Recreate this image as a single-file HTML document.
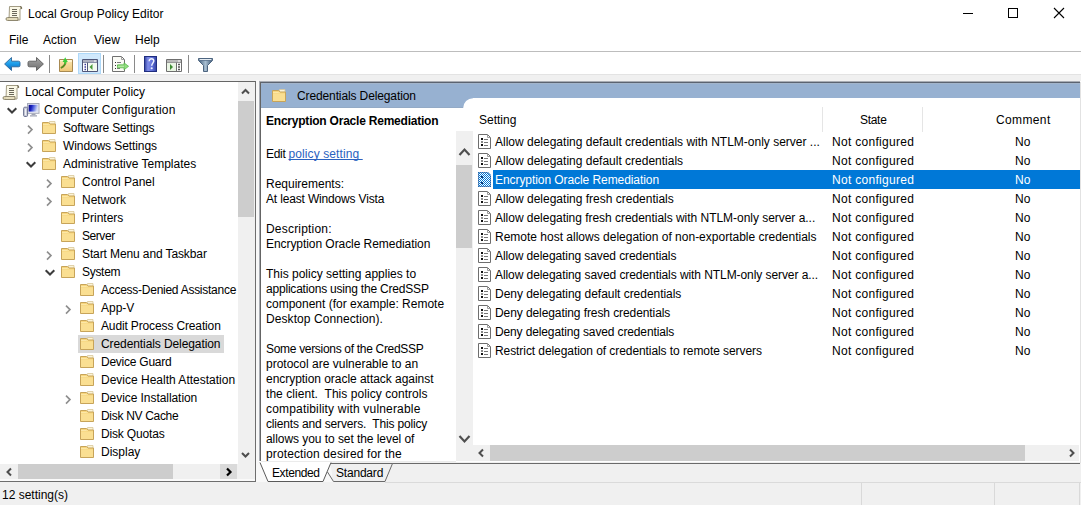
<!DOCTYPE html>
<html><head><meta charset="utf-8">
<style>
*{box-sizing:border-box}
html,body{margin:0;padding:0}
body{width:1081px;height:505px;overflow:hidden;position:relative;background:#f0f0f0;font-family:"Liberation Sans",sans-serif;font-size:12px;color:#000}
.a{position:absolute}
.t{position:absolute;line-height:14px;white-space:pre}
svg{position:absolute;overflow:visible}
</style></head><body>
<div class="a" style="left:0px;top:0px;width:1081px;height:74px;background:#fff;"></div>
<div class="a" style="left:0px;top:51px;width:1081px;height:1px;background:#bdbdbd;"></div>
<div class="a" style="left:0px;top:74px;width:1081px;height:1px;background:#e3e3e3;"></div>
<svg class="a" style="left:7px;top:6px" width="15" height="15" viewBox="0 0 15 15"><path d="M2.5 0.5h10.5l1.5 1.5-1.5 1v11h-11z" fill="#fbf8e6" stroke="#a39c84"/><path d="M13 0.6a1.4 1.4 0 0 1 1.3 2.2" fill="none" stroke="#777058" stroke-width="1.3"/><path d="M5 3.5h5M5 5.5h5M5 7.5h5M5 9.5h5" stroke="#6a675a" stroke-width="1"/><path d="M0.5 11.5h10.5v3h-10.5a1.5 1.5 0 0 1 0-3z" fill="#ddd3ae" stroke="#8f8870"/><path d="M2 13h8" stroke="#f4eed6" stroke-width="0.8"/></svg>
<div class="t" style="left:28px;top:7px;">Local Group Policy Editor</div>
<div class="t" style="left:9px;top:33px;">File</div>
<div class="t" style="left:43px;top:33px;">Action</div>
<div class="t" style="left:94px;top:33px;">View</div>
<div class="t" style="left:135px;top:33px;">Help</div>
<div class="a" style="left:963px;top:13px;width:10px;height:1px;background:#000;"></div>
<div class="a" style="left:1008px;top:8px;width:10px;height:10px;border:1px solid #000"></div>
<svg class="a" style="left:1053px;top:7px" width="12" height="12" viewBox="0 0 12 12"><path d="M1 1L11 11M11 1L1 11" stroke="#000" stroke-width="1.1"/></svg>
<svg class="a" style="left:4px;top:57px" width="17" height="15" viewBox="0 0 17 15"><defs><linearGradient id="bg1" x1="0" y1="0" x2="0" y2="1"><stop offset="0" stop-color="#4cc4fb"/><stop offset="0.5" stop-color="#1c9be8"/><stop offset="1" stop-color="#0b64b6"/></linearGradient></defs><path d="M0.6 7L7.5 0.5V4.2H14.5Q16 4.2 16 5.7V8.3Q16 9.8 14.5 9.8H7.5V13.5Z" fill="url(#bg1)" stroke="#2d6499" stroke-width="0.9" stroke-linejoin="round"/></svg>
<svg class="a" style="left:27px;top:57px" width="17" height="15" viewBox="0 0 17 15"><defs><linearGradient id="bg2" x1="0" y1="0" x2="0" y2="1"><stop offset="0" stop-color="#a8a8a8"/><stop offset="0.5" stop-color="#8a8a8a"/><stop offset="1" stop-color="#6e6e6e"/></linearGradient></defs><path d="M16.4 7L9.5 0.5V4.2H2.5Q1 4.2 1 5.7V8.3Q1 9.8 2.5 9.8H9.5V13.5Z" fill="url(#bg2)" stroke="#5a5a5a" stroke-width="0.9" stroke-linejoin="round"/></svg>
<div class="a" style="left:49px;top:55px;width:1px;height:18px;background:#8a8a8a;"></div>
<svg class="a" style="left:59px;top:56px" width="15" height="16" viewBox="0 0 15 16"><defs><linearGradient id="fu" x1="0" y1="0" x2="0" y2="1"><stop offset="0" stop-color="#f9e6b0"/><stop offset="1" stop-color="#eec677"/></linearGradient></defs><path d="M0.5 3.5h13v12h-13z" fill="url(#fu)" stroke="#a88a52"/><path d="M1 4.5h12M7 5.5h6" stroke="#fff3cf" stroke-width="1"/><path d="M6.5 5.5C6.5 9 5 10.5 1.8 12" fill="none" stroke="#5a8a22" stroke-width="1.9"/><path d="M3.6 6L6.2 1.2L8.8 6z" fill="#3ccd3a"/><path d="M5.5 5v3h1.6V5z" fill="#3ccd3a"/></svg>
<div class="a" style="left:78px;top:53px;width:23px;height:21px;background:#d0e8fc;border:1px solid #aed8f8"></div>
<svg class="a" style="left:82px;top:59px" width="16" height="13" viewBox="0 0 16 13"><path d="M0.5 0.5h15v12h-15z" fill="#fff" stroke="#4f5577"/><path d="M1 2h11M12.5 2h1M14 2h1" stroke="#5a6080" stroke-width="1"/><path d="M1 3.5h14" stroke="#8a90a8"/><path d="M5.5 3.5v9" stroke="#4f5577"/><path d="M2.5 5.5h1.5M2.5 8h1.5M2.5 10.5h1.5" stroke="#3a3a9a" stroke-width="1.3"/><rect x="6" y="4" width="9" height="8" fill="#f4faf0"/><path d="M10.5 5L7.5 8L10.5 11z" fill="#4a9a3a"/></svg>
<div class="a" style="left:103px;top:55px;width:1px;height:18px;background:#8a8a8a;"></div>
<svg class="a" style="left:112px;top:56px" width="17" height="16" viewBox="0 0 17 16"><path d="M0.5 0.5h9l3 3v12h-12z" fill="#fbfbf6" stroke="#707070"/><path d="M9.5 0.5v3h3" fill="none" stroke="#a0a0a0"/><path d="M3 6.5h1M3 9.5h1M3 12.5h1" stroke="#333" stroke-width="1.1"/><path d="M5 6.5h4M5 9.5h3M5 12.5h3" stroke="#7a7a7a" stroke-width="1"/><path d="M5.5 8.8h6.5V6.8l4.6 3.5L12 13.8v-2H5.5z" fill="#86dc72" fill-opacity="0.9" stroke="#52b443" stroke-width="0.7"/><path d="M6 10.3h6" stroke="#c8f0b8" stroke-width="0.8"/></svg>
<div class="a" style="left:134px;top:55px;width:1px;height:18px;background:#8a8a8a;"></div>
<svg class="a" style="left:144px;top:56px" width="13" height="16" viewBox="0 0 13 16"><defs><linearGradient id="hg" x1="0" x2="1"><stop offset="0" stop-color="#25358e"/><stop offset="0.3" stop-color="#7e8cea"/><stop offset="0.65" stop-color="#5f6fd8"/><stop offset="1" stop-color="#2c3c98"/></linearGradient></defs><rect x="0" y="0" width="13" height="16" fill="url(#hg)"/><rect x="0.5" y="0.5" width="12" height="15" fill="none" stroke="#1f2d80"/><path d="M5.2 5.2C5.2 3.4 6.3 2.8 7.5 2.8S9.8 3.6 9.8 5.1 7.8 7.4 7.7 9.8" fill="none" stroke="#eef2ff" stroke-width="1.5"/><circle cx="7.7" cy="12.3" r="1.05" fill="#eef2ff"/></svg>
<svg class="a" style="left:166px;top:59px" width="16" height="13" viewBox="0 0 16 13"><path d="M0.5 0.5h15v12h-15z" fill="#fff" stroke="#6e6e6e"/><path d="M1 2h11M12.5 2h1M14 2h1" stroke="#777" stroke-width="1"/><path d="M1 3.5h14" stroke="#999"/><path d="M10.5 3.5v9" stroke="#6e6e6e"/><path d="M12 5.5h2M12 8h2M12 10.5h2" stroke="#555" stroke-width="1.3"/><rect x="1" y="4" width="9" height="8" fill="#eaf5e4"/><path d="M4 5L7 8L4 11z" fill="#3c8c32"/></svg>
<div class="a" style="left:188px;top:55px;width:1px;height:18px;background:#8a8a8a;"></div>
<svg class="a" style="left:198px;top:58px" width="15" height="14" viewBox="0 0 15 14"><defs><linearGradient id="fg" x1="0" x2="1"><stop offset="0" stop-color="#3f5c7a"/><stop offset="0.5" stop-color="#a9bfd2"/><stop offset="1" stop-color="#3d5876"/></linearGradient></defs><path d="M0.5 0.5h14v2L9.5 7.5v6h-4v-6L0.5 2.5z" fill="url(#fg)" stroke="#4d6580" stroke-linejoin="round"/><path d="M1.5 1.5h12" stroke="#e6edf3" stroke-width="1"/><path d="M1 2.5h13" stroke="#5d7590" stroke-width="0.8"/></svg>
<div class="a" style="left:0;top:81px;width:256px;height:401px;background:#fff;border-top:1px solid #666;border-right:1px solid #6e6e6e;border-bottom:1px solid #6e6e6e"></div>
<div class="a" style="left:256px;top:80px;width:3px;height:402px;background:#f8f8f8;"></div>
<div class="a" style="left:78px;top:335px;width:146px;height:18px;background:#d9d9d9;"></div>
<div class="a" style="left:0;top:82px;width:238px;height:381px;overflow:hidden">
<svg class="a" style="left:4px;top:3px" width="15" height="15" viewBox="0 0 15 15"><path d="M2.5 0.5h10.5l1.5 1.5-1.5 1v11h-11z" fill="#fbf8e6" stroke="#a39c84"/><path d="M13 0.6a1.4 1.4 0 0 1 1.3 2.2" fill="none" stroke="#777058" stroke-width="1.3"/><path d="M5 3.5h5M5 5.5h5M5 7.5h5M5 9.5h5" stroke="#6a675a" stroke-width="1"/><path d="M0.5 11.5h10.5v3h-10.5a1.5 1.5 0 0 1 0-3z" fill="#ddd3ae" stroke="#8f8870"/><path d="M2 13h8" stroke="#f4eed6" stroke-width="0.8"/></svg>
<div class="t" style="left:25px;top:3px;">Local Computer Policy</div>
<svg class="a" style="left:7px;top:25px" width="10" height="7" viewBox="0 0 10 7"><path d="M0.7 1.2L5 5.5L9.3 1.2" fill="none" stroke="#3c3c3c" stroke-width="2"/></svg>
<svg class="a" style="left:23px;top:21px" width="17" height="14" viewBox="0 0 17 14"><defs><linearGradient id="cg" x1="0" y1="0" x2="1" y2="0.2"><stop offset="0" stop-color="#0c0c7a"/><stop offset="0.35" stop-color="#1c24c0"/><stop offset="0.6" stop-color="#5a6ae0"/><stop offset="1" stop-color="#d4dcf6"/></linearGradient></defs><rect x="4.5" y="0.5" width="11.5" height="9.8" fill="#eceef6" stroke="#a4a8b8"/><rect x="5.6" y="1.8" width="9.4" height="6.8" fill="url(#cg)"/><path d="M8.5 11.3h4M7 12.8h7" stroke="#a0a4b4" stroke-width="1.2"/><rect x="0.6" y="4.2" width="4" height="9.3" rx="1.2" fill="#c8ccd8" stroke="#6c7290"/><path d="M2.6 6v6" stroke="#f4f4fa" stroke-width="1"/></svg>
<div class="t" style="left:44px;top:21px;;letter-spacing:0.190px">Computer Configuration</div>
<svg class="a" style="left:27px;top:43px" width="7" height="10" viewBox="0 0 7 10"><path d="M1 0.6L5 4.6L1 8.6" fill="none" stroke="#8e8e8e" stroke-width="1.6"/></svg>
<svg class="a" style="left:42px;top:39px" width="14" height="13" viewBox="0 0 14 13"><path d="M7.5 0.5h5.5v3h-5.5z" fill="#fbf3d8" stroke="#d8c89a" stroke-width="0.8"/><path d="M0.5 1.5h6l1.5 1.5h5.5v9.5h-13z" fill="#f7d57c" stroke="#c7a45a"/><path d="M1 3.5h5.5l1.2-0.2" fill="none" stroke="#fbe7a8" stroke-width="1"/><rect x="1" y="4.5" width="12" height="7.5" fill="#fadf92"/></svg>
<div class="t" style="left:63px;top:39px;;letter-spacing:-0.162px">Software Settings</div>
<svg class="a" style="left:27px;top:61px" width="7" height="10" viewBox="0 0 7 10"><path d="M1 0.6L5 4.6L1 8.6" fill="none" stroke="#8e8e8e" stroke-width="1.6"/></svg>
<svg class="a" style="left:42px;top:57px" width="14" height="13" viewBox="0 0 14 13"><path d="M7.5 0.5h5.5v3h-5.5z" fill="#fbf3d8" stroke="#d8c89a" stroke-width="0.8"/><path d="M0.5 1.5h6l1.5 1.5h5.5v9.5h-13z" fill="#f7d57c" stroke="#c7a45a"/><path d="M1 3.5h5.5l1.2-0.2" fill="none" stroke="#fbe7a8" stroke-width="1"/><rect x="1" y="4.5" width="12" height="7.5" fill="#fadf92"/></svg>
<div class="t" style="left:63px;top:57px;;letter-spacing:-0.093px">Windows Settings</div>
<svg class="a" style="left:26px;top:79px" width="10" height="7" viewBox="0 0 10 7"><path d="M0.7 1.2L5 5.5L9.3 1.2" fill="none" stroke="#3c3c3c" stroke-width="2"/></svg>
<svg class="a" style="left:42px;top:75px" width="14" height="13" viewBox="0 0 14 13"><path d="M7.5 0.5h5.5v3h-5.5z" fill="#fbf3d8" stroke="#d8c89a" stroke-width="0.8"/><path d="M0.5 1.5h6l1.5 1.5h5.5v9.5h-13z" fill="#f7d57c" stroke="#c7a45a"/><path d="M1 3.5h5.5l1.2-0.2" fill="none" stroke="#fbe7a8" stroke-width="1"/><rect x="1" y="4.5" width="12" height="7.5" fill="#fadf92"/></svg>
<div class="t" style="left:63px;top:75px;">Administrative Templates</div>
<svg class="a" style="left:46px;top:97px" width="7" height="10" viewBox="0 0 7 10"><path d="M1 0.6L5 4.6L1 8.6" fill="none" stroke="#8e8e8e" stroke-width="1.6"/></svg>
<svg class="a" style="left:61px;top:93px" width="14" height="13" viewBox="0 0 14 13"><path d="M7.5 0.5h5.5v3h-5.5z" fill="#fbf3d8" stroke="#d8c89a" stroke-width="0.8"/><path d="M0.5 1.5h6l1.5 1.5h5.5v9.5h-13z" fill="#f7d57c" stroke="#c7a45a"/><path d="M1 3.5h5.5l1.2-0.2" fill="none" stroke="#fbe7a8" stroke-width="1"/><rect x="1" y="4.5" width="12" height="7.5" fill="#fadf92"/></svg>
<div class="t" style="left:82px;top:93px;">Control Panel</div>
<svg class="a" style="left:46px;top:115px" width="7" height="10" viewBox="0 0 7 10"><path d="M1 0.6L5 4.6L1 8.6" fill="none" stroke="#8e8e8e" stroke-width="1.6"/></svg>
<svg class="a" style="left:61px;top:111px" width="14" height="13" viewBox="0 0 14 13"><path d="M7.5 0.5h5.5v3h-5.5z" fill="#fbf3d8" stroke="#d8c89a" stroke-width="0.8"/><path d="M0.5 1.5h6l1.5 1.5h5.5v9.5h-13z" fill="#f7d57c" stroke="#c7a45a"/><path d="M1 3.5h5.5l1.2-0.2" fill="none" stroke="#fbe7a8" stroke-width="1"/><rect x="1" y="4.5" width="12" height="7.5" fill="#fadf92"/></svg>
<div class="t" style="left:82px;top:111px;">Network</div>
<svg class="a" style="left:61px;top:129px" width="14" height="13" viewBox="0 0 14 13"><path d="M7.5 0.5h5.5v3h-5.5z" fill="#fbf3d8" stroke="#d8c89a" stroke-width="0.8"/><path d="M0.5 1.5h6l1.5 1.5h5.5v9.5h-13z" fill="#f7d57c" stroke="#c7a45a"/><path d="M1 3.5h5.5l1.2-0.2" fill="none" stroke="#fbe7a8" stroke-width="1"/><rect x="1" y="4.5" width="12" height="7.5" fill="#fadf92"/></svg>
<div class="t" style="left:82px;top:129px;">Printers</div>
<svg class="a" style="left:61px;top:147px" width="14" height="13" viewBox="0 0 14 13"><path d="M7.5 0.5h5.5v3h-5.5z" fill="#fbf3d8" stroke="#d8c89a" stroke-width="0.8"/><path d="M0.5 1.5h6l1.5 1.5h5.5v9.5h-13z" fill="#f7d57c" stroke="#c7a45a"/><path d="M1 3.5h5.5l1.2-0.2" fill="none" stroke="#fbe7a8" stroke-width="1"/><rect x="1" y="4.5" width="12" height="7.5" fill="#fadf92"/></svg>
<div class="t" style="left:82px;top:147px;;letter-spacing:-0.440px">Server</div>
<svg class="a" style="left:46px;top:169px" width="7" height="10" viewBox="0 0 7 10"><path d="M1 0.6L5 4.6L1 8.6" fill="none" stroke="#8e8e8e" stroke-width="1.6"/></svg>
<svg class="a" style="left:61px;top:165px" width="14" height="13" viewBox="0 0 14 13"><path d="M7.5 0.5h5.5v3h-5.5z" fill="#fbf3d8" stroke="#d8c89a" stroke-width="0.8"/><path d="M0.5 1.5h6l1.5 1.5h5.5v9.5h-13z" fill="#f7d57c" stroke="#c7a45a"/><path d="M1 3.5h5.5l1.2-0.2" fill="none" stroke="#fbe7a8" stroke-width="1"/><rect x="1" y="4.5" width="12" height="7.5" fill="#fadf92"/></svg>
<div class="t" style="left:82px;top:165px;;letter-spacing:-0.110px">Start Menu and Taskbar</div>
<svg class="a" style="left:45px;top:187px" width="10" height="7" viewBox="0 0 10 7"><path d="M0.7 1.2L5 5.5L9.3 1.2" fill="none" stroke="#3c3c3c" stroke-width="2"/></svg>
<svg class="a" style="left:61px;top:183px" width="14" height="13" viewBox="0 0 14 13"><path d="M7.5 0.5h5.5v3h-5.5z" fill="#fbf3d8" stroke="#d8c89a" stroke-width="0.8"/><path d="M0.5 1.5h6l1.5 1.5h5.5v9.5h-13z" fill="#f7d57c" stroke="#c7a45a"/><path d="M1 3.5h5.5l1.2-0.2" fill="none" stroke="#fbe7a8" stroke-width="1"/><rect x="1" y="4.5" width="12" height="7.5" fill="#fadf92"/></svg>
<div class="t" style="left:82px;top:183px;;letter-spacing:-0.300px">System</div>
<svg class="a" style="left:80px;top:201px" width="14" height="13" viewBox="0 0 14 13"><path d="M7.5 0.5h5.5v3h-5.5z" fill="#fbf3d8" stroke="#d8c89a" stroke-width="0.8"/><path d="M0.5 1.5h6l1.5 1.5h5.5v9.5h-13z" fill="#f7d57c" stroke="#c7a45a"/><path d="M1 3.5h5.5l1.2-0.2" fill="none" stroke="#fbe7a8" stroke-width="1"/><rect x="1" y="4.5" width="12" height="7.5" fill="#fadf92"/></svg>
<div class="t" style="left:101px;top:201px;;letter-spacing:-0.265px">Access-Denied Assistance</div>
<svg class="a" style="left:65px;top:223px" width="7" height="10" viewBox="0 0 7 10"><path d="M1 0.6L5 4.6L1 8.6" fill="none" stroke="#8e8e8e" stroke-width="1.6"/></svg>
<svg class="a" style="left:80px;top:219px" width="14" height="13" viewBox="0 0 14 13"><path d="M7.5 0.5h5.5v3h-5.5z" fill="#fbf3d8" stroke="#d8c89a" stroke-width="0.8"/><path d="M0.5 1.5h6l1.5 1.5h5.5v9.5h-13z" fill="#f7d57c" stroke="#c7a45a"/><path d="M1 3.5h5.5l1.2-0.2" fill="none" stroke="#fbe7a8" stroke-width="1"/><rect x="1" y="4.5" width="12" height="7.5" fill="#fadf92"/></svg>
<div class="t" style="left:101px;top:219px;">App-V</div>
<svg class="a" style="left:80px;top:237px" width="14" height="13" viewBox="0 0 14 13"><path d="M7.5 0.5h5.5v3h-5.5z" fill="#fbf3d8" stroke="#d8c89a" stroke-width="0.8"/><path d="M0.5 1.5h6l1.5 1.5h5.5v9.5h-13z" fill="#f7d57c" stroke="#c7a45a"/><path d="M1 3.5h5.5l1.2-0.2" fill="none" stroke="#fbe7a8" stroke-width="1"/><rect x="1" y="4.5" width="12" height="7.5" fill="#fadf92"/></svg>
<div class="t" style="left:101px;top:237px;;letter-spacing:-0.138px">Audit Process Creation</div>
<svg class="a" style="left:80px;top:255px" width="14" height="13" viewBox="0 0 14 13"><path d="M7.5 0.5h5.5v3h-5.5z" fill="#fbf3d8" stroke="#d8c89a" stroke-width="0.8"/><path d="M0.5 1.5h6l1.5 1.5h5.5v9.5h-13z" fill="#f7d57c" stroke="#c7a45a"/><path d="M1 3.5h5.5l1.2-0.2" fill="none" stroke="#fbe7a8" stroke-width="1"/><rect x="1" y="4.5" width="12" height="7.5" fill="#fadf92"/></svg>
<div class="t" style="left:101px;top:255px;;letter-spacing:-0.090px">Credentials Delegation</div>
<svg class="a" style="left:80px;top:273px" width="14" height="13" viewBox="0 0 14 13"><path d="M7.5 0.5h5.5v3h-5.5z" fill="#fbf3d8" stroke="#d8c89a" stroke-width="0.8"/><path d="M0.5 1.5h6l1.5 1.5h5.5v9.5h-13z" fill="#f7d57c" stroke="#c7a45a"/><path d="M1 3.5h5.5l1.2-0.2" fill="none" stroke="#fbe7a8" stroke-width="1"/><rect x="1" y="4.5" width="12" height="7.5" fill="#fadf92"/></svg>
<div class="t" style="left:101px;top:273px;;letter-spacing:-0.245px">Device Guard</div>
<svg class="a" style="left:80px;top:291px" width="14" height="13" viewBox="0 0 14 13"><path d="M7.5 0.5h5.5v3h-5.5z" fill="#fbf3d8" stroke="#d8c89a" stroke-width="0.8"/><path d="M0.5 1.5h6l1.5 1.5h5.5v9.5h-13z" fill="#f7d57c" stroke="#c7a45a"/><path d="M1 3.5h5.5l1.2-0.2" fill="none" stroke="#fbe7a8" stroke-width="1"/><rect x="1" y="4.5" width="12" height="7.5" fill="#fadf92"/></svg>
<div class="t" style="left:101px;top:291px;">Device Health Attestation</div>
<svg class="a" style="left:65px;top:313px" width="7" height="10" viewBox="0 0 7 10"><path d="M1 0.6L5 4.6L1 8.6" fill="none" stroke="#8e8e8e" stroke-width="1.6"/></svg>
<svg class="a" style="left:80px;top:309px" width="14" height="13" viewBox="0 0 14 13"><path d="M7.5 0.5h5.5v3h-5.5z" fill="#fbf3d8" stroke="#d8c89a" stroke-width="0.8"/><path d="M0.5 1.5h6l1.5 1.5h5.5v9.5h-13z" fill="#f7d57c" stroke="#c7a45a"/><path d="M1 3.5h5.5l1.2-0.2" fill="none" stroke="#fbe7a8" stroke-width="1"/><rect x="1" y="4.5" width="12" height="7.5" fill="#fadf92"/></svg>
<div class="t" style="left:101px;top:309px;;letter-spacing:-0.061px">Device Installation</div>
<svg class="a" style="left:80px;top:327px" width="14" height="13" viewBox="0 0 14 13"><path d="M7.5 0.5h5.5v3h-5.5z" fill="#fbf3d8" stroke="#d8c89a" stroke-width="0.8"/><path d="M0.5 1.5h6l1.5 1.5h5.5v9.5h-13z" fill="#f7d57c" stroke="#c7a45a"/><path d="M1 3.5h5.5l1.2-0.2" fill="none" stroke="#fbe7a8" stroke-width="1"/><rect x="1" y="4.5" width="12" height="7.5" fill="#fadf92"/></svg>
<div class="t" style="left:101px;top:327px;;letter-spacing:-0.308px">Disk NV Cache</div>
<svg class="a" style="left:80px;top:345px" width="14" height="13" viewBox="0 0 14 13"><path d="M7.5 0.5h5.5v3h-5.5z" fill="#fbf3d8" stroke="#d8c89a" stroke-width="0.8"/><path d="M0.5 1.5h6l1.5 1.5h5.5v9.5h-13z" fill="#f7d57c" stroke="#c7a45a"/><path d="M1 3.5h5.5l1.2-0.2" fill="none" stroke="#fbe7a8" stroke-width="1"/><rect x="1" y="4.5" width="12" height="7.5" fill="#fadf92"/></svg>
<div class="t" style="left:101px;top:345px;;letter-spacing:-0.170px">Disk Quotas</div>
<svg class="a" style="left:80px;top:363px" width="14" height="13" viewBox="0 0 14 13"><path d="M7.5 0.5h5.5v3h-5.5z" fill="#fbf3d8" stroke="#d8c89a" stroke-width="0.8"/><path d="M0.5 1.5h6l1.5 1.5h5.5v9.5h-13z" fill="#f7d57c" stroke="#c7a45a"/><path d="M1 3.5h5.5l1.2-0.2" fill="none" stroke="#fbe7a8" stroke-width="1"/><rect x="1" y="4.5" width="12" height="7.5" fill="#fadf92"/></svg>
<div class="t" style="left:101px;top:363px;">Display</div>
</div>
<div class="a" style="left:238px;top:82px;width:17px;height:397px;background:#f0f0f0;"></div>
<div class="a" style="left:238px;top:101px;width:16px;height:116px;background:#cdcdcd;"></div>
<svg class="a" style="left:241px;top:88px" width="9" height="8" viewBox="0 0 9 8"><path d="M1 5.5L4.5 2L8 5.5" fill="none" stroke="#4e4e4e" stroke-width="2"/></svg>
<svg class="a" style="left:241px;top:451px" width="9" height="8" viewBox="0 0 9 8"><path d="M1 2L4.5 5.5L8 2" fill="none" stroke="#4e4e4e" stroke-width="2"/></svg>
<div class="a" style="left:0px;top:464px;width:238px;height:15px;background:#f0f0f0;"></div>
<div class="a" style="left:18px;top:464px;width:155px;height:15px;background:#cdcdcd;"></div>
<div class="a" style="left:220px;top:464px;width:17px;height:15px;background:#dadada;"></div>
<svg class="a" style="left:5px;top:467px" width="8" height="10" viewBox="0 0 8 10"><path d="M6 1.5L2.5 5L6 8.5" fill="none" stroke="#4e4e4e" stroke-width="2"/></svg>
<svg class="a" style="left:225px;top:467px" width="8" height="10" viewBox="0 0 8 10"><path d="M2 1.5L5.5 5L2 8.5" fill="none" stroke="#000" stroke-width="2.2"/></svg>
<div class="a" style="left:0px;top:479px;width:255px;height:2px;background:#fafafa;"></div>
<div class="a" style="left:259px;top:81px;width:822px;height:381px;background:#fff;"></div>
<div class="a" style="left:259px;top:81px;width:821px;height:1px;background:#a9adb4;"></div>
<div class="a" style="left:259px;top:81px;width:1px;height:380px;background:#a9adb4;"></div>
<div class="a" style="left:260px;top:82px;width:820px;height:1px;background:#5b6370;"></div>
<div class="a" style="left:260px;top:82px;width:1px;height:379px;background:#646464;"></div>
<div class="a" style="left:261px;top:461px;width:195px;height:1px;background:#ebebeb;"></div>
<div class="a" style="left:1080px;top:82px;width:1px;height:381px;background:#e2e2e2;"></div>
<div class="a" style="left:261px;top:83px;width:819px;height:15px;background:#97b1d1;"></div>
<div class="a" style="left:261px;top:98px;width:202px;height:10px;background:#97b1d1;"></div>
<svg class="a" style="left:463px;top:98px" width="10" height="10" viewBox="0 0 10 10"><path d="M0 0H10V0.2A9.8 9.8 0 0 0 0.2 10H0z" fill="#97b1d1"/></svg>
<div class="a" style="left:261px;top:83px;width:819px;height:1px;background:#a3b5cb;"></div>
<div class="a" style="left:261px;top:107px;width:202px;height:1px;background:#93aac6;"></div>
<svg class="a" style="left:272px;top:89px" width="14" height="13" viewBox="0 0 14 13"><path d="M7.5 0.5h5.5v3h-5.5z" fill="#fbf3d8" stroke="#d8c89a" stroke-width="0.8"/><path d="M0.5 1.5h6l1.5 1.5h5.5v9.5h-13z" fill="#f7d57c" stroke="#c7a45a"/><path d="M1 3.5h5.5l1.2-0.2" fill="none" stroke="#fbe7a8" stroke-width="1"/><rect x="1" y="4.5" width="12" height="7.5" fill="#fadf92"/></svg>
<div class="t" style="left:297px;top:89px;;letter-spacing:-0.119px">Credentials Delegation</div>
<div class="a" style="left:261px;top:108px;width:195px;height:353px;overflow:hidden">
<div class="t" style="left:5px;top:6px;font-weight:bold;letter-spacing:-0.22px">Encryption Oracle Remediation</div>
<div class="t" style="left:5px;top:39px;"><span style="letter-spacing:-0.3px">Edit </span><span style="color:#2a62c0;text-decoration:underline;text-decoration-skip-ink:none;letter-spacing:0.1px">policy setting </span></div>
<div class="t" style="left:5px;top:69px;">Requirements:</div>
<div class="t" style="left:5px;top:84px;;letter-spacing:-0.162px">At least Windows Vista</div>
<div class="t" style="left:5px;top:114px;;letter-spacing:0.200px">Description:</div>
<div class="t" style="left:5px;top:129px;;letter-spacing:-0.061px">Encryption Oracle Remediation</div>
<div class="t" style="left:5px;top:159px;">This policy setting applies to</div>
<div class="t" style="left:5px;top:174px;;letter-spacing:-0.203px">applications using the CredSSP</div>
<div class="t" style="left:5px;top:189px;">component (for example: Remote</div>
<div class="t" style="left:5px;top:204px;;letter-spacing:0.074px">Desktop Connection).</div>
<div class="t" style="left:5px;top:234px;;letter-spacing:-0.311px">Some versions of the CredSSP</div>
<div class="t" style="left:5px;top:249px;">protocol are vulnerable to an</div>
<div class="t" style="left:5px;top:264px;;letter-spacing:-0.042px">encryption oracle attack against</div>
<div class="t" style="left:5px;top:279px;;letter-spacing:0.053px">the client.  This policy controls</div>
<div class="t" style="left:5px;top:294px;;letter-spacing:0.175px">compatibility with vulnerable</div>
<div class="t" style="left:5px;top:309px;;letter-spacing:-0.162px">clients and servers.  This policy</div>
<div class="t" style="left:5px;top:324px;;letter-spacing:-0.059px">allows you to set the level of</div>
<div class="t" style="left:5px;top:339px;;letter-spacing:0.116px">protection desired for the</div>
</div>
<div class="a" style="left:456px;top:131px;width:17px;height:330px;background:#f0f0f0;"></div>
<div class="a" style="left:456px;top:165px;width:16px;height:83px;background:#cdcdcd;"></div>
<svg class="a" style="left:458px;top:147px" width="13" height="10" viewBox="0 0 13 10"><path d="M1.5 8L6.5 2.6L11.5 8" fill="none" stroke="#4e4e4e" stroke-width="2.2"/></svg>
<svg class="a" style="left:458px;top:434px" width="13" height="10" viewBox="0 0 13 10"><path d="M1.5 2L6.5 7.4L11.5 2" fill="none" stroke="#4e4e4e" stroke-width="2.2"/></svg>
<div class="t" style="left:479px;top:113px;">Setting</div>
<div class="t" style="left:860px;top:113px;;letter-spacing:-0.300px">State</div>
<div class="t" style="left:996px;top:113px;;letter-spacing:0.367px">Comment</div>
<div class="a" style="left:822px;top:107px;width:1px;height:25px;background:#e5e5e5;"></div>
<div class="a" style="left:922px;top:107px;width:1px;height:25px;background:#e5e5e5;"></div>
<svg class="a" style="left:478px;top:134px" width="13" height="15" viewBox="0 0 13 15"><path d="M0.5 0.5h9l3 3v11h-12z" fill="#fff" stroke="#6e6e6e"/><path d="M9.5 0.5v3h3" fill="none" stroke="#9a9a9a"/><rect x="3" y="4" width="2" height="2" fill="#111"/><rect x="3" y="7" width="2" height="2" fill="#8a8a8a"/><rect x="3" y="10" width="2" height="2" fill="#111"/><path d="M6 5.5h4M6 8.5h4M6 11.5h4" stroke="#777" stroke-width="1"/></svg>
<div class="t" style="left:495px;top:135px;">Allow delegating default credentials with NTLM-only server ...</div>
<div class="t" style="left:832px;top:135px;;letter-spacing:0.292px">Not configured</div>
<div class="t" style="left:1015px;top:135px;">No</div>
<svg class="a" style="left:478px;top:153px" width="13" height="15" viewBox="0 0 13 15"><path d="M0.5 0.5h9l3 3v11h-12z" fill="#fff" stroke="#6e6e6e"/><path d="M9.5 0.5v3h3" fill="none" stroke="#9a9a9a"/><rect x="3" y="4" width="2" height="2" fill="#111"/><rect x="3" y="7" width="2" height="2" fill="#8a8a8a"/><rect x="3" y="10" width="2" height="2" fill="#111"/><path d="M6 5.5h4M6 8.5h4M6 11.5h4" stroke="#777" stroke-width="1"/></svg>
<div class="t" style="left:495px;top:154px;">Allow delegating default credentials</div>
<div class="t" style="left:832px;top:154px;;letter-spacing:0.292px">Not configured</div>
<div class="t" style="left:1015px;top:154px;">No</div>
<div class="a" style="left:493px;top:170px;width:587px;height:19px;background:#0078d7;"></div>
<svg class="a" style="left:478px;top:172px" width="13" height="15" viewBox="0 0 13 15"><defs><pattern id="dp" width="2" height="2" patternUnits="userSpaceOnUse"><rect width="2" height="2" fill="#fff"/><rect width="1" height="1" fill="#0078d7"/><rect x="1" y="1" width="1" height="1" fill="#0078d7"/></pattern></defs><path d="M0 0h10l3 3v12h-13z" fill="url(#dp)"/><path d="M0.5 0.5h9l3 3v11h-12z" fill="none" stroke="#2a5a9a" stroke-opacity="0.6"/><rect x="3" y="4" width="2" height="2" fill="#0a3a7a"/><rect x="3" y="10" width="2" height="2" fill="#0a3a7a"/></svg>
<div class="t" style="left:495px;top:173px;color:#fff;letter-spacing:-0.071px">Encryption Oracle Remediation</div>
<div class="t" style="left:832px;top:173px;color:#fff;letter-spacing:0.292px">Not configured</div>
<div class="t" style="left:1015px;top:173px;color:#fff">No</div>
<svg class="a" style="left:478px;top:191px" width="13" height="15" viewBox="0 0 13 15"><path d="M0.5 0.5h9l3 3v11h-12z" fill="#fff" stroke="#6e6e6e"/><path d="M9.5 0.5v3h3" fill="none" stroke="#9a9a9a"/><rect x="3" y="4" width="2" height="2" fill="#111"/><rect x="3" y="7" width="2" height="2" fill="#8a8a8a"/><rect x="3" y="10" width="2" height="2" fill="#111"/><path d="M6 5.5h4M6 8.5h4M6 11.5h4" stroke="#777" stroke-width="1"/></svg>
<div class="t" style="left:495px;top:192px;">Allow delegating fresh credentials</div>
<div class="t" style="left:832px;top:192px;;letter-spacing:0.292px">Not configured</div>
<div class="t" style="left:1015px;top:192px;">No</div>
<svg class="a" style="left:478px;top:210px" width="13" height="15" viewBox="0 0 13 15"><path d="M0.5 0.5h9l3 3v11h-12z" fill="#fff" stroke="#6e6e6e"/><path d="M9.5 0.5v3h3" fill="none" stroke="#9a9a9a"/><rect x="3" y="4" width="2" height="2" fill="#111"/><rect x="3" y="7" width="2" height="2" fill="#8a8a8a"/><rect x="3" y="10" width="2" height="2" fill="#111"/><path d="M6 5.5h4M6 8.5h4M6 11.5h4" stroke="#777" stroke-width="1"/></svg>
<div class="t" style="left:495px;top:211px;;letter-spacing:-0.032px">Allow delegating fresh credentials with NTLM-only server a...</div>
<div class="t" style="left:832px;top:211px;;letter-spacing:0.292px">Not configured</div>
<div class="t" style="left:1015px;top:211px;">No</div>
<svg class="a" style="left:478px;top:229px" width="13" height="15" viewBox="0 0 13 15"><path d="M0.5 0.5h9l3 3v11h-12z" fill="#fff" stroke="#6e6e6e"/><path d="M9.5 0.5v3h3" fill="none" stroke="#9a9a9a"/><rect x="3" y="4" width="2" height="2" fill="#111"/><rect x="3" y="7" width="2" height="2" fill="#8a8a8a"/><rect x="3" y="10" width="2" height="2" fill="#111"/><path d="M6 5.5h4M6 8.5h4M6 11.5h4" stroke="#777" stroke-width="1"/></svg>
<div class="t" style="left:495px;top:230px;">Remote host allows delegation of non-exportable credentials</div>
<div class="t" style="left:832px;top:230px;;letter-spacing:0.292px">Not configured</div>
<div class="t" style="left:1015px;top:230px;">No</div>
<svg class="a" style="left:478px;top:248px" width="13" height="15" viewBox="0 0 13 15"><path d="M0.5 0.5h9l3 3v11h-12z" fill="#fff" stroke="#6e6e6e"/><path d="M9.5 0.5v3h3" fill="none" stroke="#9a9a9a"/><rect x="3" y="4" width="2" height="2" fill="#111"/><rect x="3" y="7" width="2" height="2" fill="#8a8a8a"/><rect x="3" y="10" width="2" height="2" fill="#111"/><path d="M6 5.5h4M6 8.5h4M6 11.5h4" stroke="#777" stroke-width="1"/></svg>
<div class="t" style="left:495px;top:249px;;letter-spacing:-0.082px">Allow delegating saved credentials</div>
<div class="t" style="left:832px;top:249px;;letter-spacing:0.292px">Not configured</div>
<div class="t" style="left:1015px;top:249px;">No</div>
<svg class="a" style="left:478px;top:267px" width="13" height="15" viewBox="0 0 13 15"><path d="M0.5 0.5h9l3 3v11h-12z" fill="#fff" stroke="#6e6e6e"/><path d="M9.5 0.5v3h3" fill="none" stroke="#9a9a9a"/><rect x="3" y="4" width="2" height="2" fill="#111"/><rect x="3" y="7" width="2" height="2" fill="#8a8a8a"/><rect x="3" y="10" width="2" height="2" fill="#111"/><path d="M6 5.5h4M6 8.5h4M6 11.5h4" stroke="#777" stroke-width="1"/></svg>
<div class="t" style="left:495px;top:268px;;letter-spacing:-0.073px">Allow delegating saved credentials with NTLM-only server a...</div>
<div class="t" style="left:832px;top:268px;;letter-spacing:0.292px">Not configured</div>
<div class="t" style="left:1015px;top:268px;">No</div>
<svg class="a" style="left:478px;top:286px" width="13" height="15" viewBox="0 0 13 15"><path d="M0.5 0.5h9l3 3v11h-12z" fill="#fff" stroke="#6e6e6e"/><path d="M9.5 0.5v3h3" fill="none" stroke="#9a9a9a"/><rect x="3" y="4" width="2" height="2" fill="#111"/><rect x="3" y="7" width="2" height="2" fill="#8a8a8a"/><rect x="3" y="10" width="2" height="2" fill="#111"/><path d="M6 5.5h4M6 8.5h4M6 11.5h4" stroke="#777" stroke-width="1"/></svg>
<div class="t" style="left:495px;top:287px;;letter-spacing:-0.032px">Deny delegating default credentials</div>
<div class="t" style="left:832px;top:287px;;letter-spacing:0.292px">Not configured</div>
<div class="t" style="left:1015px;top:287px;">No</div>
<svg class="a" style="left:478px;top:305px" width="13" height="15" viewBox="0 0 13 15"><path d="M0.5 0.5h9l3 3v11h-12z" fill="#fff" stroke="#6e6e6e"/><path d="M9.5 0.5v3h3" fill="none" stroke="#9a9a9a"/><rect x="3" y="4" width="2" height="2" fill="#111"/><rect x="3" y="7" width="2" height="2" fill="#8a8a8a"/><rect x="3" y="10" width="2" height="2" fill="#111"/><path d="M6 5.5h4M6 8.5h4M6 11.5h4" stroke="#777" stroke-width="1"/></svg>
<div class="t" style="left:495px;top:306px;;letter-spacing:-0.088px">Deny delegating fresh credentials</div>
<div class="t" style="left:832px;top:306px;;letter-spacing:0.292px">Not configured</div>
<div class="t" style="left:1015px;top:306px;">No</div>
<svg class="a" style="left:478px;top:324px" width="13" height="15" viewBox="0 0 13 15"><path d="M0.5 0.5h9l3 3v11h-12z" fill="#fff" stroke="#6e6e6e"/><path d="M9.5 0.5v3h3" fill="none" stroke="#9a9a9a"/><rect x="3" y="4" width="2" height="2" fill="#111"/><rect x="3" y="7" width="2" height="2" fill="#8a8a8a"/><rect x="3" y="10" width="2" height="2" fill="#111"/><path d="M6 5.5h4M6 8.5h4M6 11.5h4" stroke="#777" stroke-width="1"/></svg>
<div class="t" style="left:495px;top:325px;;letter-spacing:-0.131px">Deny delegating saved credentials</div>
<div class="t" style="left:832px;top:325px;;letter-spacing:0.292px">Not configured</div>
<div class="t" style="left:1015px;top:325px;">No</div>
<svg class="a" style="left:478px;top:343px" width="13" height="15" viewBox="0 0 13 15"><path d="M0.5 0.5h9l3 3v11h-12z" fill="#fff" stroke="#6e6e6e"/><path d="M9.5 0.5v3h3" fill="none" stroke="#9a9a9a"/><rect x="3" y="4" width="2" height="2" fill="#111"/><rect x="3" y="7" width="2" height="2" fill="#8a8a8a"/><rect x="3" y="10" width="2" height="2" fill="#111"/><path d="M6 5.5h4M6 8.5h4M6 11.5h4" stroke="#777" stroke-width="1"/></svg>
<div class="t" style="left:495px;top:344px;;letter-spacing:-0.075px">Restrict delegation of credentials to remote servers</div>
<div class="t" style="left:832px;top:344px;;letter-spacing:0.292px">Not configured</div>
<div class="t" style="left:1015px;top:344px;">No</div>
<div class="a" style="left:473px;top:445px;width:606px;height:16px;background:#f0f0f0;"></div>
<div class="a" style="left:490px;top:445px;width:535px;height:16px;background:#cdcdcd;"></div>
<svg class="a" style="left:477px;top:448px" width="8" height="10" viewBox="0 0 8 10"><path d="M6 1.5L2.5 5L6 8.5" fill="none" stroke="#4e4e4e" stroke-width="2"/></svg>
<svg class="a" style="left:1068px;top:448px" width="8" height="10" viewBox="0 0 8 10"><path d="M2 1.5L5.5 5L2 8.5" fill="none" stroke="#4e4e4e" stroke-width="2"/></svg>
<div class="a" style="left:260px;top:462px;width:820px;height:20px;background:#f0f0f0;"></div>
<div class="a" style="left:259px;top:462px;width:73px;height:20px;background:#f8f8f8;"></div>
<div class="a" style="left:392px;top:463px;width:688px;height:1px;background:#6a6a6a;"></div>
<svg class="a" style="left:260px;top:462px" width="140" height="21" viewBox="0 0 140 21"><path d="M70 1.5H132.5L125 19.5H74z" fill="#f0f0f0"/><path d="M67.5 10L73.5 19.5H125L132.5 1.5H71" fill="none" stroke="#6a6a6a"/><path d="M0 0H71L63 19.5H8z" fill="#fff"/><path d="M0 0.5L8 19.5H63L71 0.5" fill="none" stroke="#5a5a5a"/></svg>
<div class="t" style="left:272px;top:466px;letter-spacing:-0.4px">Extended</div>
<div class="t" style="left:336px;top:466px;letter-spacing:-0.2px">Standard</div>
<div class="a" style="left:0px;top:482px;width:1081px;height:23px;background:#f0f0f0;"></div>
<div class="a" style="left:385px;top:482px;width:696px;height:1px;background:#dadada;"></div>
<div class="t" style="left:2px;top:488px;">12 setting(s)</div>
<div class="a" style="left:861px;top:483px;width:1px;height:22px;background:#d9d9d9;"></div>
<div class="a" style="left:994px;top:483px;width:1px;height:22px;background:#d9d9d9;"></div>
<div class="a" style="left:1079px;top:483px;width:1px;height:22px;background:#d9d9d9;"></div>
</body></html>
